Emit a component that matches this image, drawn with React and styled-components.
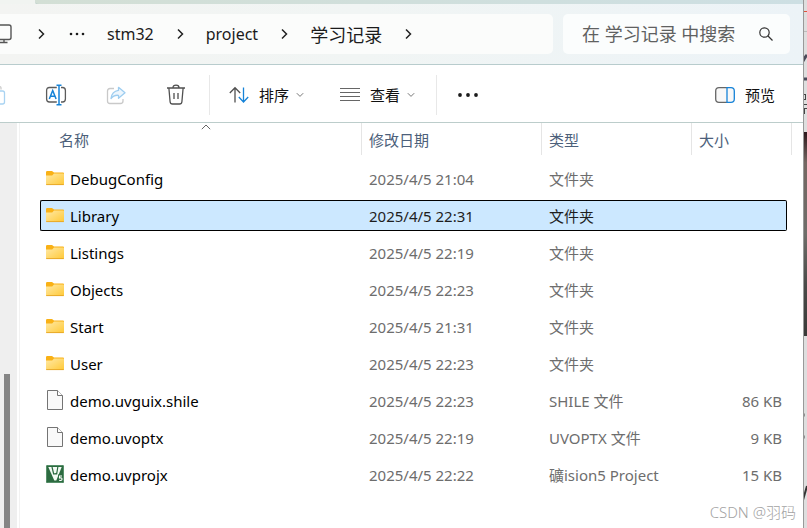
import React, { useState } from "react";
import styled, { createGlobalStyle } from "styled-components";

const GlobalStyle = createGlobalStyle`
    *{
        box-sizing: border-box;
    }
    body{
        margin: 0;
        background: #fff;
        font-family: "Noto Sans", "Noto Sans CJK SC", sans-serif;
        font-size: 15px;
        color: #000;
    }
    button, input{
        font: inherit;
        color: inherit;
        background: none;
        border: 0;
        margin: 0;
        padding: 0;
    }
    svg{
        display: block;
        flex: none;
    }
`;

const Desktop = styled.div`
    display: flex;
    min-height: 100vh;
    overflow: hidden;
    position: relative;
`;

const Explorer = styled.main`
    flex: 1;
    min-width: 0;
    display: flex;
    flex-direction: column;
    background: #fff;
`;

const TabStrip = styled.div`
    height: 4px;
    background: #f1f4f1;
    padding-left: 35px;
    &::before{
        content: "";
        display: block;
        height: 4px;
        border-bottom: 1px solid #b9ccca;
        border-bottom-left-radius: 4px;
        background: linear-gradient(90deg, #d3dfd5, #cddfe3);
    }
`;

const AddressBar = styled.div`
    display: flex;
    gap: 10px;
    height: 61px;
    padding: 10px 13px 10px 0;
    background: linear-gradient(90deg, #f3f4f2, #f1f5f4 45%, #ecf3f7);
    border-bottom: 1px solid #b8cccd;
`;

const Crumbs = styled.nav`
    flex: 1;
    min-width: 0;
    display: flex;
    align-items: center;
    gap: 20px;
    overflow: hidden;
    background: #fbfcfb;
    border-radius: 0 5px 5px 0;
    color: #1b1b1b;
`;

const Crumb = styled.a`
    font-size: ${props => props.lang === "zh" ? "18px" : "16px"};
    color: inherit;
    text-decoration: none;
    white-space: nowrap;
`;

const DeviceIcon = styled.svg`
    margin-left: -9px;
    margin-right: 3px;
`;

const SearchBox = styled.label`
    width: 227px;
    display: flex;
    align-items: center;
    padding: 0 16px 0 19px;
    background: #fbfdfd;
    border-radius: 5px;
    font-size: 18px;
    input{
        flex: 1;
        min-width: 0;
        outline: none;
    }
    input::placeholder{
        color: #5f6161;
        opacity: 1;
    }
`;

const Toolbar = styled.div`
    display: flex;
    align-items: center;
    height: 58px;
    padding: 2px 10px 0 0;
    border-bottom: 1px solid #bccdcb;
    overflow: hidden;
`;

const IconButton = styled.button`
    flex: none;
    width: 60px;
    height: 40px;
    display: flex;
    align-items: center;
    justify-content: center;
`;

const Clipped = styled.div`
    display: flex;
    margin-left: -34px;
`;

const TextButton = styled.button`
    flex: none;
    display: flex;
    align-items: center;
    height: 40px;
    padding: 0 18px;
    gap: 10px;
    color: #111;
    margin-left: ${props => props.$end ? "auto" : "0"};
    span{
        display: flex;
        align-items: center;
        gap: 7px;
    }
`;

const Divider = styled.div`
    width: 1px;
    height: 40px;
    margin: 0 1px 0 3px;
    background: #e8e8e8;
`;

const Content = styled.div`
    flex: 1;
    display: flex;
`;

const ScrollTrack = styled.div`
    width: 17px;
    padding: 251px 7px 0 4px;
    background: #efefef;
    display: flex;
    div{
        flex: 1;
        background: #858585;
    }
`;

const FilePane = styled.div`
    flex: 1;
    min-width: 0;
    margin-left: 2px;
    padding: 0 11px 0 20px;
    border-left: 1px solid #f2f2f2;
`;

const FileTable = styled.table`
    width: 100%;
    table-layout: fixed;
    border-spacing: 0;
    th, td{
        padding: 3px 0;
        text-align: left;
        font-weight: normal;
    }
    th{
        padding: 0 0 5px;
    }
`;

const Column = styled.col`
    width: ${props => props.$width};
`;

const HeadButton = styled.button`
    position: relative;
    display: block;
    width: 100%;
    height: 32px;
    padding-left: ${props => props.$first ? "19px" : "7px"};
    border-right: 1px solid #e5e5e5;
    text-align: left;
    color: #4c607a;
`;

const SortMark = styled.svg`
    position: absolute;
    top: 1px;
    left: 50%;
`;

const Cell = styled.div`
    display: flex;
    align-items: center;
    height: 31px;
    padding-left: 7px;
    white-space: nowrap;
    color: ${props => props.$selected ? "#1e1e1e" : "#6d6d6d"};
    background: ${props => props.$selected ? "#cce8ff" : "transparent"};
    border: solid ${props => props.$selected ? "#000" : "transparent"};
    border-width: 1px 0;
`;

const NameCell = styled(Cell)`
    gap: 6px;
    padding-left: 5px;
    color: #000;
    border-left-width: 1px;
    border-radius: 2px 0 0 2px;
`;

const SizeCell = styled(Cell)`
    justify-content: flex-end;
    margin-right: 5px;
    padding-right: 4px;
    border-right-width: 1px;
    border-radius: 0 2px 2px 0;
`;

const Backdrop = styled.svg`
    width: 4px;
`;

const Watermark = styled.div`
    position: absolute;
    right: 11px;
    bottom: 6px;
    font-weight: 300;
    color: #a3a3a3;
`;

const Chevron = () => (
    <svg width="12" height="12" viewBox="0 0 12 12" fill="none" stroke="#222" strokeWidth="1.5">
        <path d="M4 1.5 8.5 6 4 10.5" />
    </svg>
);

const DownMark = () => (
    <svg width="8" height="6" viewBox="0 0 8 6" fill="none" stroke="#777" strokeWidth="1">
        <path d="M.8 1.2 4 4.4 7.2 1.2" />
    </svg>
);

const Dots = ({ r, gap }) => (
    <svg width="20" height="12" viewBox="0 0 20 12" fill="#1b1b1b">
        <circle cx={10 - gap} cy="6" r={r} />
        <circle cx="10" cy="6" r={r} />
        <circle cx={10 + gap} cy="6" r={r} />
    </svg>
);

const FolderIcon = () => (
    <svg width="18" height="18" viewBox="0 0 18 18">
        <defs>
            <linearGradient id="folder" x1="0" y1="0" x2="1" y2="1">
                <stop offset="0" stopColor="#ffe9a6" />
                <stop offset="1" stopColor="#ffc937" />
            </linearGradient>
        </defs>
        <path d="M0 2.2Q0 1 1.2 1H6l2 1.6h9Q18 2.6 18 3.6V6H0Z" fill="#f9b116" />
        <path d="M0 5.5h6.2L8 3.6h9.2q.8 0 .8.8v9.8q0 .8-.8.8H.8q-.8 0-.8-.8Z" fill="url(#folder)" />
        <path d="M.2 14.6h17.6" stroke="#e5a422" strokeWidth=".9" />
    </svg>
);

const PageIcon = () => (
    <svg width="18" height="22" viewBox="0 0 18 22" fill="#f9f9f9" stroke="#747474">
        <path d="M1.5.5H11.5L16.500 5.500V19.500H1.500Z" />
        <path d="M11.500.5V5.500H16.500" fill="#fff" />
    </svg>
);

const KeilIcon = () => (
    <svg width="18" height="22" viewBox="0 0 18 22">
        <rect y="1" width="18" height="18" rx="1.5" fill="#2c6b40" />
        <rect x=".5" y="1.5" width="17" height="17" rx="1" fill="none" stroke="#57906a" />
        <path d="M2.300 3H15.700L10.300 16.500H8.300Z" fill="#f4faf5" />
        <path d="M6 3 7.800 10.500M7.200 9.500q2.600 1.200 4-.8M11.800 3 10.600 10.500" fill="none" stroke="#2c6b40" strokeWidth="1.200" />
        <path d="M12 10.500h5v7.500h-5z" fill="#2c6b40" />
        <path d="M16 12h-2.500v2q2.500-.4 2.500 1.200t-2.800 1.200" fill="none" stroke="#fff" strokeWidth="1.100" />
    </svg>
);

const icons = { folder: FolderIcon, page: PageIcon, keil: KeilIcon };

const files = [
    { name: "DebugConfig", date: "2025/4/5 21:04", type: "文件夹", icon: "folder" },
    { name: "Library", date: "2025/4/5 22:31", type: "文件夹", icon: "folder" },
    { name: "Listings", date: "2025/4/5 22:19", type: "文件夹", icon: "folder" },
    { name: "Objects", date: "2025/4/5 22:23", type: "文件夹", icon: "folder" },
    { name: "Start", date: "2025/4/5 21:31", type: "文件夹", icon: "folder" },
    { name: "User", date: "2025/4/5 22:23", type: "文件夹", icon: "folder" },
    { name: "demo.uvguix.shile", date: "2025/4/5 22:23", type: "SHILE 文件", size: "86 KB", icon: "page" },
    { name: "demo.uvoptx", date: "2025/4/5 22:19", type: "UVOPTX 文件", size: "9 KB", icon: "page" },
    { name: "demo.uvprojx", date: "2025/4/5 22:22", type: "礦ision5 Project", size: "15 KB", icon: "keil" },
];

function FileRow({ file, selected, onSelect }) {
    const Icon = icons[file.icon];
    return (
        <tr onClick={onSelect} aria-selected={selected}>
            <td><NameCell $selected={selected}><Icon />{file.name}</NameCell></td>
            <td><Cell $selected={selected}>{file.date}</Cell></td>
            <td><Cell $selected={selected}>{file.type}</Cell></td>
            <td><SizeCell $selected={selected}>{file.size}</SizeCell></td>
        </tr>
    );
}

export default function App() {
    const [current, setCurrent] = useState("Library");
    const [keyword, setKeyword] = useState("");

    return (
        <Desktop>
            <GlobalStyle />
            <Explorer>
                <TabStrip />
                <AddressBar>
                    <Crumbs>
                        <DeviceIcon width="21" height="20" viewBox="0 0 21 20" fill="none" stroke="#555" strokeWidth="1.4">
                            <rect x="1" y="1" width="19" height="14.5" rx="2" />
                            <path d="M8 15.5v3M13 15.5v3M5.5 18.5h11" />
                        </DeviceIcon>
                        <Chevron />
                        <Dots r={1.3} gap={6} />
                        <Crumb href="#stm32">stm32</Crumb>
                        <Chevron />
                        <Crumb href="#project">project</Crumb>
                        <Chevron />
                        <Crumb href="#current" lang="zh">学习记录</Crumb>
                        <Chevron />
                    </Crumbs>
                    <SearchBox>
                        <input
                            aria-label="搜索"
                            placeholder="在 学习记录 中搜索"
                            value={keyword}
                            onChange={(e) => setKeyword(e.target.value)}
                        />
                        <svg width="16" height="16" viewBox="0 0 16 16" fill="none" stroke="#333" strokeWidth="1.2">
                            <circle cx="6.5" cy="6.5" r="4.7" />
                            <path d="m10 10 4.500 4.500" />
                        </svg>
                    </SearchBox>
                </AddressBar>
                <Toolbar>
                    <Clipped>
                        <IconButton aria-label="粘贴">
                            <svg width="20" height="20" viewBox="0 0 20 20" fill="none" stroke="#a9d3f2" strokeWidth="1.3">
                                <path d="M15 4.500V3q0-1.500-2-1.500" stroke="#ccc" />
                                <rect x="9" y="6" width="9.5" height="13" rx="2" />
                            </svg>
                        </IconButton>
                        <IconButton aria-label="重命名">
                            <svg width="22" height="22" viewBox="0 0 22 22" fill="none" stroke="#5c5c5c" strokeWidth="1.3">
                                <path d="M11.800 3.500H4.500Q1.600 3.500 1.600 6.500v8.500q0 3 2.900 3h7.300M16 3.500h1.500q2.900 0 2.900 3v8.500q0 3-2.900 3H16" />
                                <path d="M4.300 15 7.700 6.500 11.100 15M5.500 12.200h4.400M11.500 1.200h5M14 1.200v19.600M11.500 20.800h5" stroke="#1683d8" strokeWidth="1.5" />
                            </svg>
                        </IconButton>
                        <IconButton aria-label="共享">
                            <svg width="20" height="20" viewBox="0 0 20 20" fill="none" strokeWidth="1.3" strokeLinejoin="round">
                                <path d="M8 3.500H4q-2.500 0-2.500 2.500v10q0 2.500 2.500 2.500h10.500q2.500 0 2.500-2.500v-2" stroke="#c9c9c9" />
                                <path d="M12.500 2.300 19 7.800l-6.500 5.500V10.300Q7.700 9.800 5 13.500q.8-7.200 7.500-8.200Z" stroke="#9dcdf0" fill="#edf6fd" />
                            </svg>
                        </IconButton>
                        <IconButton aria-label="删除">
                            <svg width="20" height="22" viewBox="0 0 20 22" fill="none" stroke="#505050" strokeWidth="1.3">
                                <path d="M1 4h18M7 3.800q0-2.600 3-2.600t3 2.600M2.900 4.200l1.200 13.500q.2 2.300 2.400 2.300h7q2.200 0 2.400-2.300L17.100 4.200M8 9v6M12 9v6" />
                            </svg>
                        </IconButton>
                    </Clipped>
                    <Divider />
                    <TextButton>
                        <svg width="20" height="18" viewBox="0 0 20 18" fill="none" strokeWidth="1.3">
                            <path d="M6 16.500V2M.8 7 6 1.700 11.200 7" stroke="#505050" />
                            <path d="M14.500 1.500V16M9.800 11l4.700 5 4.700-5" stroke="#1683d8" />
                        </svg>
                        <span>排序<DownMark /></span>
                    </TextButton>
                    <TextButton>
                        <svg width="20" height="14" viewBox="0 0 20 14" stroke="#666">
                            <path d="M0 .5h20M0 4.500h20M0 8.500h20M0 12.500h20" />
                        </svg>
                        <span>查看<DownMark /></span>
                    </TextButton>
                    <Divider />
                    <IconButton aria-label="更多"><Dots r={1.9} gap={8} /></IconButton>
                    <TextButton $end>
                        <svg width="20" height="16" viewBox="0 0 20 16" fill="#f8f8f8" strokeWidth="1.3">
                            <path d="M12 .7H4Q.7.7.7 4v8q0 3.300 3.300 3.300h8" stroke="#666" />
                            <path d="M12 .7h4q3.300 0 3.300 3.300v8q0 3.300-3.300 3.300h-4Z" stroke="#1683d8" />
                        </svg>
                        <span>预览</span>
                    </TextButton>
                </Toolbar>
                <Content>
                    <ScrollTrack><div /></ScrollTrack>
                    <FilePane>
                        <FileTable>
                            <colgroup>
                                <Column $width="auto" />
                                <Column $width="180px" />
                                <Column $width="150px" />
                                <Column $width="100px" />
                            </colgroup>
                            <thead>
                                <tr>
                                    <th>
                                        <HeadButton $first>
                                            名称
                                            <SortMark width="10" height="6" viewBox="0 0 10 6" fill="none" stroke="#666">
                                                <path d="M.8 5.200 5 1l4.200 4.200" />
                                            </SortMark>
                                        </HeadButton>
                                    </th>
                                    <th><HeadButton>修改日期</HeadButton></th>
                                    <th><HeadButton>类型</HeadButton></th>
                                    <th><HeadButton>大小</HeadButton></th>
                                </tr>
                            </thead>
                            <tbody>
                                {files.map((file) => (
                                    <FileRow
                                        key={file.name}
                                        file={file}
                                        selected={file.name === current}
                                        onSelect={() => setCurrent(file.name)}
                                    />
                                ))}
                            </tbody>
                        </FileTable>
                    </FilePane>
                </Content>
            </Explorer>
            <Backdrop viewBox="0 0 4 528" preserveAspectRatio="xMinYMin slice">
                <defs>
                    <linearGradient id="photo" x1="0" y1="0" x2="0" y2="1">
                        <stop offset="0" stopColor="#2c171b" />
                        <stop offset=".15" stopColor="#756762" />
                        <stop offset=".5" stopColor="#6f6d69" />
                        <stop offset=".75" stopColor="#4a4a48" />
                        <stop offset="1" stopColor="#3a3a38" />
                    </linearGradient>
                </defs>
                <rect width="4" height="528" fill="#dedede" />
                <path d="M0 11.500h4" stroke="#e2513c" />
                <path d="M0 31.500h4" stroke="#bbb" />
                <path d="M0 61q2-4 4-6M0 79h4" stroke="#4b4b5a" strokeWidth="3" fill="none" />
                <path d="M0 94.500h3M0 99.500h3M2.500 94v6M0 104.500h4M0 108.500h4M1.500 108v6" stroke="#444" fill="none" />
                <rect y="132" width="4" height="204" fill="url(#photo)" />
                <path d="M0 415h1.500M0 437h1.500" stroke="#444" strokeWidth="3" />
                <path d="M0 500 4 486" stroke="#333" strokeWidth="2" />
                <path d="M.5 0v528" stroke="#999" />
            </Backdrop>
            <Watermark>CSDN @羽码</Watermark>
        </Desktop>
    );
}
